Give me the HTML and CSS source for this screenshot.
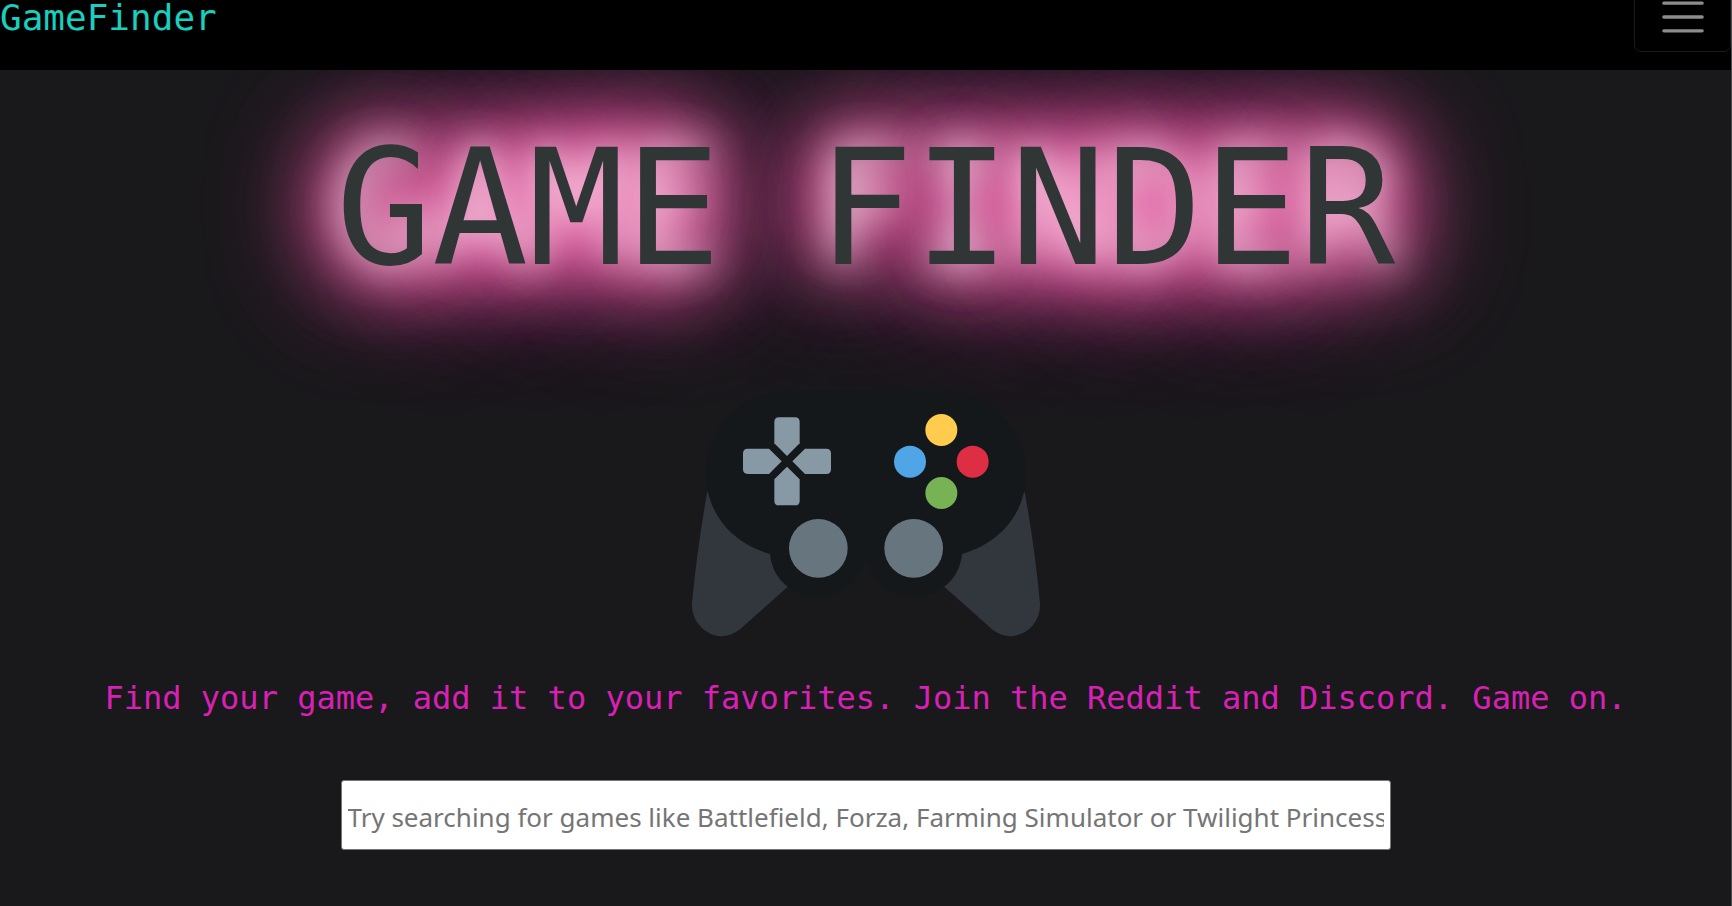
FILE: index.html
```html
<!DOCTYPE html>
<html lang="en">
<head>
<meta charset="utf-8">
<meta name="viewport" content="width=device-width, initial-scale=1">
<title>GameFinder</title>
<link rel="stylesheet" href="styles.css">
</head>
<body>
<nav class="navbar">
  <a class="brand" href="#">GameFinder</a>
  <button class="toggler" type="button" aria-label="Toggle navigation">
    <svg class="toggler-icon" viewBox="0 0 30 30" aria-hidden="true"><path stroke="#8e8c8c" stroke-linecap="round" stroke-width="2" d="M4 7h22M4 15h22M4 23h22"/></svg>
  </button>
</nav>
<main class="hero">
  <h1 class="title">GAME FINDER</h1>
  <svg class="controller" viewBox="3 0 1110 810" role="img" aria-label="Game controller">
    <g fill="#31373d">
      <path d="M82 335 Q52 500 36 670 C32 745 115 800 180 748 L325 619 L300 500Z"/>
      <path d="M1034 335 Q1064 500 1080 670 C1084 745 1001 800 936 748 L791 619 L816 500Z"/>
    </g>
    <path fill="#14181b" d="M330 30H786C930 30 1038 145 1038 280C1038 400 960 490 846 522C840 595 780 650 702 650C635 650 575 605 558 540C541 605 481 650 414 650C336 650 276 595 270 522C156 490 78 400 78 280C78 145 186 30 330 30Z"/>
    <g fill="#8899a6">
      <path id="pad" d="M297 112H345Q359 112 359 126V190L321 228L283 190V126Q283 112 297 112Z"/>
      <use href="#pad" transform="rotate(90 321 244)"/>
      <use href="#pad" transform="rotate(180 321 244)"/>
      <use href="#pad" transform="rotate(270 321 244)"/>
    </g>
    <g fill="#67757f"><circle cx="415" cy="505" r="88"/><circle cx="701" cy="505" r="88"/></g>
    <circle cx="784" cy="150" r="48" fill="#ffcc4d"/>
    <circle cx="690" cy="245" r="48" fill="#50a5e6"/>
    <circle cx="878" cy="245" r="48" fill="#dd2e44"/>
    <circle cx="784" cy="339" r="48" fill="#77b255"/>
  </svg>
  <p class="tagline">Find your game, add it to your favorites. Join the Reddit and Discord. Game on.</p>
  <form class="search" role="search">
    <input class="search-input" type="text" aria-label="Search games" placeholder="Try searching for games like Battlefield, Forza, Farming Simulator or Twilight Princess">
  </form>
</main>
</body>
</html>
```
FILE: styles.css
```css
* {
  box-sizing: border-box;
}

body {
  margin: 0;
  min-height: 100vh;
  overflow: hidden;
  background: #19191b;
  border-right: 1px solid #4c4c4e;
  font-family: "DejaVu Sans Mono", monospace;
}

.navbar {
  display: flex;
  justify-content: space-between;
  align-items: flex-start;
  height: 70px;
  overflow: hidden;
  background: #000;
}

.brand {
  color: #17d0bf;
  font-size: 36px;
  line-height: 36px;
  text-decoration: none;
}

.toggler {
  display: flex;
  align-items: center;
  justify-content: center;
  width: 97px;
  height: 72px;
  margin-top: -20px;
  padding: 2px 0 0;
  background: transparent;
  border: 1px solid #1a1a1a;
  border-radius: 7px;
}

.toggler-icon {
  width: 52px;
  height: 52px;
}

.hero {
  display: flex;
  flex-direction: column;
  align-items: center;
  overflow: hidden;
}

.title {
  margin: 43px 0 0;
  color: #2f3635;
  font-size: 160px;
  font-weight: 400;
  line-height: 192px;
  white-space: nowrap;
  text-shadow: 0 0 40px #fff, 0 0 70px #ff5cad, 0 0 80px #ff5cad, 0 0 90px #ff5cad, 0 0 110px #ff5cad, 0 0 130px #ff5cad, 0 0 150px #f05ca8;
}

.controller {
  width: 370px;
  height: 270px;
  margin-top: 75px;
}

.tagline {
  margin: 28px 0 0;
  color: #d920b6;
  font-size: 32px;
  line-height: 40px;
  text-align: center;
}

.search {
  display: flex;
  justify-content: center;
  width: 100%;
  margin-top: 62px;
}

.search-input {
  width: 1050px;
  max-width: 90%;
  height: 70px;
  padding: 4px 6px 0;
  border: 1px solid #767676;
  border-radius: 3px;
  background: #fff;
  font-family: "Noto Sans", sans-serif;
  font-size: 26px;
}

.search-input::placeholder {
  color: #757575;
  opacity: 1;
}
```
